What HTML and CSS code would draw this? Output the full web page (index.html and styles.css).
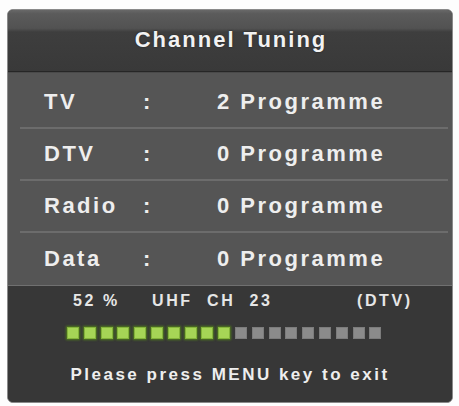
FILE: index.html
```html
<!DOCTYPE html>
<html>
<head>
<meta charset="utf-8">
<link rel="stylesheet" href="styles.css">
</head>
<body>
<div class="panel">
  <div class="header">Channel Tuning</div>
  <div class="rows">
    <div class="row"><span class="label">TV</span><span class="colon">:</span><span class="value">2 Programme</span></div>
    <div class="row"><span class="label">DTV</span><span class="colon">:</span><span class="value">0 Programme</span></div>
    <div class="row"><span class="label">Radio</span><span class="colon">:</span><span class="value">0 Programme</span></div>
    <div class="row"><span class="label">Data</span><span class="colon">:</span><span class="value">0 Programme</span></div>
  </div>
  <div class="bottom">
    <div class="status">
      <span>52 %</span><span>UHF</span><span>CH&nbsp;&nbsp;23</span><span>(DTV)</span>
    </div>
    <div class="bar">
      <i class="on"></i><i class="on"></i><i class="on"></i><i class="on"></i><i class="on"></i><i class="on"></i><i class="on"></i><i class="on"></i><i class="on"></i><i class="on"></i><i></i><i></i><i></i><i></i><i></i><i></i><i></i><i></i><i></i>
    </div>
    <div class="hint">Please press MENU key to exit</div>
  </div>
</div>
</body>
</html>
```
FILE: styles.css
```css
html, body {
  margin: 0;
  padding: 0;
  background: #fdfdfd;
}
body {
  width: 459px;
  height: 406px;
  overflow: hidden;
  font-family: "Liberation Sans", Arial, sans-serif;
  font-weight: bold;
  color: #efefef;
}
.panel {
  box-sizing: border-box;
  margin: 9px 0 0 7px;
  width: 446px;
  height: 394px;
  border-radius: 6px;
  border: 1px solid #8a8a8a;
  background: #383838;
  overflow: hidden;
  display: flex;
  flex-direction: column;
}
.header {
  height: 62px;
  border-bottom: 1px solid #262626;
  background: linear-gradient(to bottom, #686868 0, #5b5b5b 6%, #525252 30%, #3e3e3e 36%, #393939 100%);
  display: flex;
  align-items: center;
  justify-content: center;
  font-size: 22px;
  letter-spacing: 2px;
  padding-left: 2px;
  padding-bottom: 2px;
  box-sizing: border-box;
  text-shadow: 0 0 2px rgba(0,0,0,0.5);
  color: #f2f2f2;
}
.rows {
  background: #555555;
  padding: 4px 4px 0 12px;
  border-top: 1px solid #4a4a4a;
}
.row {
  height: 50px;
  border-bottom: 2px solid #6c6c6c;
  display: grid;
  grid-template-columns: 99px 74px auto;
  align-items: center;
  padding-left: 24px;
  font-size: 22px;
  letter-spacing: 2.5px;
  color: #eeeeee;
}
.row:last-child {
  border-bottom: none;
  height: 52px;
}
.bottom {
  flex: 1;
  background: #373737;
  border-top: 1px solid #707070;
  padding-top: 6px;
}
.status {
  display: grid;
  grid-template-columns: 79px 55px 150px auto;
  padding-left: 65px;
  font-size: 16px;
  line-height: 18px;
  letter-spacing: 2.6px;
  color: #e6e6e6;
}
.bar {
  display: flex;
  gap: 4.8px;
  margin: 17px 0 0 59px;
}
.bar i {
  display: block;
  width: 12px;
  height: 12px;
  background: #8b8b8b;
  box-shadow: inset 0 0 0 1px #7c7c7c;
}
.bar i.on {
  background: #a6d556;
  box-shadow: inset 0 0 0 1px #84b43a, 0 0 2px 1px #4f7a1c;
}
.hint {
  margin-top: 26px;
  font-size: 17px;
  line-height: 20px;
  letter-spacing: 2.5px;
  text-align: center;
  color: #eeeeee;
}
```
